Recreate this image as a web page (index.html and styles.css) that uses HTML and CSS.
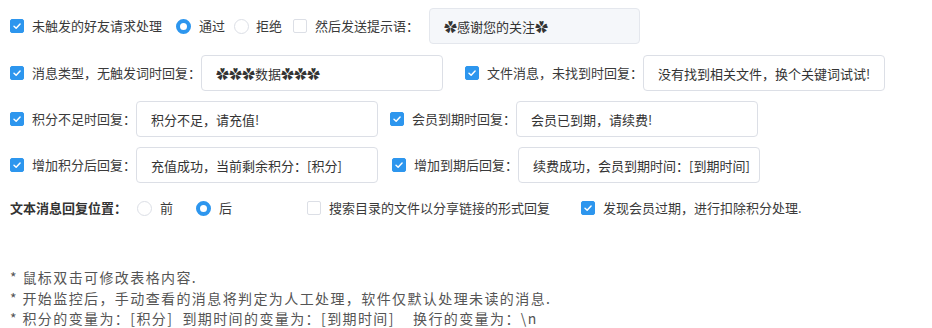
FILE: index.html
```html
<!DOCTYPE html>
<html lang="zh-CN">
<head>
    <meta charset="UTF-8">
    <title>自动回复设置</title>
    <link rel="stylesheet" href="styles.css">
</head>
<body>
    <div class="settings">
        <div class="row row-1">
            <span class="check on"><svg viewBox="0 0 14 14"><polyline points="3.5,7.2 6,9.6 10.6,4.6"/></svg></span>
            <span class="label">未触发的好友请求处理</span>
            <span class="radio on gap-radio1"></span>
            <span class="label">通过</span>
            <span class="radio gap-radio2"></span>
            <span class="label gap-r2text">拒绝</span>
            <span class="check gap-check1"></span>
            <span class="label">然后发送提示语：</span>
            <input class="field disabled gap-field1" type="text" value="✿感谢您的关注✿" disabled>
        </div>

        <div class="row row-2">
            <span class="check on"><svg viewBox="0 0 14 14"><polyline points="3.5,7.2 6,9.6 10.6,4.6"/></svg></span>
            <span class="label">消息类型，无触发词时回复：</span>
            <input class="field" type="text" value="✿✿✿数据✿✿✿">
            <span class="check on gap-22"><svg viewBox="0 0 14 14"><polyline points="3.5,7.2 6,9.6 10.6,4.6"/></svg></span>
            <span class="label">文件消息，未找到时回复：</span>
            <input class="field" type="text" value="没有找到相关文件，换个关键词试试!">
        </div>

        <div class="row row-3">
            <span class="check on"><svg viewBox="0 0 14 14"><polyline points="3.5,7.2 6,9.6 10.6,4.6"/></svg></span>
            <span class="label">积分不足时回复：</span>
            <input class="field" type="text" value="积分不足，请充值!">
            <span class="check on gap-12"><svg viewBox="0 0 14 14"><polyline points="3.5,7.2 6,9.6 10.6,4.6"/></svg></span>
            <span class="label">会员到期时回复：</span>
            <input class="field" type="text" value="会员已到期，请续费!">
        </div>

        <div class="row row-4">
            <span class="check on"><svg viewBox="0 0 14 14"><polyline points="3.5,7.2 6,9.6 10.6,4.6"/></svg></span>
            <span class="label">增加积分后回复：</span>
            <input class="field" type="text" value="充值成功，当前剩余积分：[积分]">
            <span class="check on gap-14"><svg viewBox="0 0 14 14"><polyline points="3.5,7.2 6,9.6 10.6,4.6"/></svg></span>
            <span class="label">增加到期后回复：</span>
            <input class="field" type="text" value="续费成功，会员到期时间：[到期时间]">
        </div>

        <div class="row row-5">
            <span class="label strong">文本消息回复位置：</span>
            <span class="radio gap-10"></span>
            <span class="label">前</span>
            <span class="radio on gap-23"></span>
            <span class="label">后</span>
            <span class="check gap-75"></span>
            <span class="label">搜索目录的文件以分享链接的形式回复</span>
            <span class="check on gap-31"><svg viewBox="0 0 14 14"><polyline points="3.5,7.2 6,9.6 10.6,4.6"/></svg></span>
            <span class="label">发现会员过期，进行扣除积分处理.</span>
        </div>
    </div>

    <div class="notes">
        <p>* 鼠标双击可修改表格内容.</p>
        <p>* 开始监控后，手动查看的消息将判定为人工处理，软件仅默认处理未读的消息.</p>
        <p>* 积分的变量为：[积分]&nbsp; 到期时间的变量为：[到期时间]&nbsp;&nbsp;&nbsp; 换行的变量为：\n</p>
    </div>
</body>
</html>
```

FILE: styles.css
```css
* {
    margin: 0;
    padding: 0;
    box-sizing: border-box;
}

body {
    font-family: "Noto Sans CJK SC", "Noto Sans", sans-serif;
    font-size: 13px;
    color: #3a3a3a;
    background: #fff;
    padding: 8px 0 0 10px;
}

.row {
    display: flex;
    align-items: center;
    height: 36px;
}

.row-2 { margin-top: 11px; }
.row-3 { margin-top: 10px; }
.row-4 { margin-top: 10px; }
.row-5 { margin-top: 7px; }

.label {
    margin-left: 8px;
    white-space: nowrap;
    line-height: 20px;
}

.label.strong {
    margin-left: 0;
    font-weight: bold;
    color: #333;
}

.check {
    width: 14px;
    height: 14px;
    border: 1px solid #dcdfe6;
    border-radius: 2px;
    background: #fff;
    flex-shrink: 0;
    display: flex;
}

.check.on {
    background: #2d96ee;
    border-color: #2d96ee;
}

.check svg {
    width: 12px;
    height: 12px;
    fill: none;
    stroke: #fff;
    stroke-width: 1.7;
    stroke-linecap: round;
    stroke-linejoin: round;
}

.radio {
    width: 15px;
    height: 15px;
    border: 1px solid #dcdfe6;
    border-radius: 50%;
    background: #fff;
    flex-shrink: 0;
}

.radio.on {
    border: 4px solid #2d96ee;
}

.field {
    width: 242px;
    height: 36px;
    padding: 0 2px 0 14px;
    border: 1px solid #dcdfe6;
    border-radius: 4px;
    font-family: inherit;
    font-size: 13px;
    color: #333;
    background: #fff;
    outline: none;
}

.field.disabled {
    width: 211px;
    background: #f5f7fa;
    border-color: #e4e7ed;
    color: #333;
}

.gap-radio1 { margin-left: 14px; }
.gap-radio2 { margin-left: 9px; }
.gap-r2text { margin-left: 7px; }
.gap-check1 { margin-left: 11px; }
.gap-field1 { margin-left: 10px; }
.gap-10 { margin-left: 10px; }
.gap-12 { margin-left: 12px; }
.gap-14 { margin-left: 14px; }
.gap-22 { margin-left: 22px; }
.gap-23 { margin-left: 23px; }
.gap-31 { margin-left: 31px; }
.gap-75 { margin-left: 75px; }

.notes {
    margin-top: 41px;
    color: #555;
    font-size: 14px;
    letter-spacing: 1.4px;
    line-height: 20.5px;
}
```
